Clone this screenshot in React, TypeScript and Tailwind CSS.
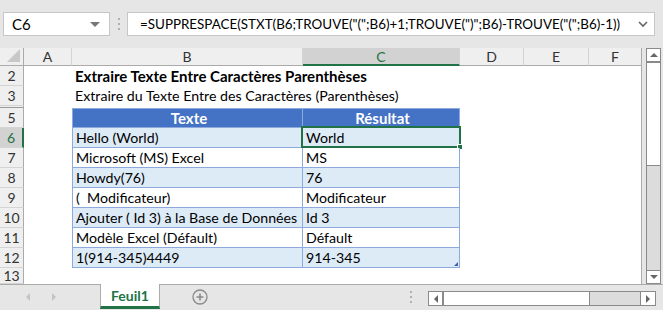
import React from "react";

const font = "font-['Lato','Open_Sans',sans-serif]";

type Row = {
  n: number;
  h: number;
  b?: string;
  c?: string;
  kind?: "title" | "sub" | "head" | "data";
  band?: boolean;
};

const rows: Row[] = [
  { n: 2, h: 20, b: "Extraire Texte Entre Caractères Parenthèses", kind: "title" },
  { n: 3, h: 20, b: "Extraire du Texte Entre des Caractères (Parenthèses)", kind: "sub" },
  { n: 5, h: 20, b: "Texte", c: "Résultat", kind: "head" },
  { n: 6, h: 20, b: "Hello (World)", c: "World", kind: "data", band: true },
  { n: 7, h: 20, b: "Microsoft (MS) Excel", c: "MS", kind: "data" },
  { n: 8, h: 20, b: "Howdy(76)", c: "76", kind: "data", band: true },
  { n: 9, h: 20, b: "(  Modificateur)", c: "Modificateur", kind: "data" },
  { n: 10, h: 20, b: "Ajouter ( Id 3) à la Base de Données", c: "Id 3", kind: "data", band: true },
  { n: 11, h: 20, b: "Modèle Excel (Défault)", c: "Défault", kind: "data" },
  { n: 12, h: 20, b: "1(914-345)4449", c: "914-345", kind: "data", band: true },
  { n: 13, h: 16 },
];

const RowHeader = ({ n, h, active }: { n: number; h: number; active?: boolean }) => (
  <div
    className={`w-[24px] shrink-0 flex items-center justify-center text-[14px] border-b border-[#d4d4d4] ${
      active
        ? "bg-[#d2d2d2] text-[#217346] border-r-2 border-r-[#217346]"
        : "bg-[#efefef] text-[#333] border-r border-r-[#ababab]"
    }`}
    style={{ height: h }}
  >
    {n}
  </div>
);

const SheetRow = ({ r }: { r: Row }) => {
  const isTable = r.kind === "head" || r.kind === "data";
  const bg = r.kind === "head" ? "bg-[#4472c4]" : r.band ? "bg-[#ddebf7]" : "bg-white";
  const txt =
    r.kind === "head"
      ? "text-white font-bold justify-center text-[15px]"
      : "text-black text-[14.2px]";
  return (
    <div className="flex">
      <RowHeader n={r.n} h={r.h} active={r.n === 6} />
      <div className="w-[48px] shrink-0 bg-white" />
      {isTable ? (
        <>
          <div
            className={`w-[231px] shrink-0 flex items-center pl-[3px] border-l border-b border-r border-[#8ea9db] ${bg} ${txt} ${
              r.kind === "head" ? "border-t" : ""
            }`}
            style={{ height: r.h }}
          >
            <span className="whitespace-pre">{r.b}</span>
          </div>
          <div
            className={`relative w-[157px] shrink-0 flex items-center pl-[3px] border-b border-r border-[#8ea9db] ${bg} ${txt} ${
              r.kind === "head" ? "border-t" : ""
            }`}
            style={{ height: r.h }}
          >
            <span>{r.c}</span>
            {r.n === 6 && (
              <>
                <div className="absolute -left-[2px] -top-[2px] -right-[2px] -bottom-[1px] border-2 border-[#217346]" />
                <div className="absolute -right-[4px] -bottom-[3px] w-[6px] h-[6px] bg-[#217346] border border-white" />
              </>
            )}
            {r.n === 12 && (
              <div className="absolute right-[1px] bottom-[1px] w-0 h-0 border-l-[4px] border-l-transparent border-b-[4px] border-b-[#3f5fa8]" />
            )}
          </div>
          <div className="flex-1 bg-white" />
        </>
      ) : (
        <div
          className={`flex-1 bg-white flex items-center pl-[3px] text-black ${
            r.kind === "title" ? "font-bold text-[15px]" : "text-[14.2px]"
          }`}
          style={{ height: r.h }}
        >
          <span className="whitespace-nowrap">{r.b}</span>
        </div>
      )}
    </div>
  );
};

const ColHeader = ({ label, w, active }: { label: string; w: number; active?: boolean }) => (
  <div
    className={`shrink-0 h-[18px] flex items-center justify-center text-[14px] border-r border-[#d4d4d4] ${
      active ? "bg-[#d2d2d2] text-[#217346] border-b-2 border-b-[#217346]" : "bg-[#efefef] text-[#333] border-b border-b-[#ababab]"
    }`}
    style={{ width: w }}
  >
    {label}
  </div>
);

export default function App() {
  return (
    <div className={`w-[663px] h-[310px] bg-[#e6e6e6] overflow-hidden ${font}`}>
      {/* formula bar */}
      <div className="h-[48px] flex items-start pt-[12px]">
        <div className="ml-[3px] w-[107px] h-[24px] bg-white border border-[#c6c6c6] flex items-center pl-[8px] pr-[9px] text-[15px] text-black">
          <span className="flex-1">C6</span>
          <div className="w-0 h-0 border-l-[5px] border-r-[5px] border-t-[5px] border-l-transparent border-r-transparent border-t-[#777]" />
        </div>
        <div className="w-[17px] h-[24px] flex flex-col items-center justify-center gap-[3px]">
          <div className="w-[2px] h-[2px] bg-[#b0b0b0]" />
          <div className="w-[2px] h-[2px] bg-[#b0b0b0]" />
          <div className="w-[2px] h-[2px] bg-[#b0b0b0]" />
        </div>
        <div className="w-[528px] h-[24px] bg-white border border-[#c6c6c6] flex items-center pl-[12px] pr-[6px] text-[13.4px] text-black">
          <span className="flex-1 whitespace-nowrap">
            =SUPPRESPACE(STXT(B6;TROUVE("(";B6)+1;TROUVE(")";B6)-TROUVE("(";B6)-1))
          </span>
          <svg width="10" height="8" viewBox="0 0 10 8">
            <path d="M1 2 L5 6 L9 2" stroke="#666" strokeWidth="1.6" fill="none" />
          </svg>
        </div>
      </div>

      {/* sheet */}
      <div className="flex h-[236px]">
        <div className="w-[642px] flex flex-col bg-white border-r border-[#ababab]">
          <div className="flex">
            <div className="w-[24px] h-[18px] shrink-0 bg-[#efefef] border-r border-b border-[#ababab] relative">
              <div className="absolute right-[3px] bottom-[3px] w-0 h-0 border-l-[13px] border-l-transparent border-b-[13px] border-b-[#c8c8c8]" />
            </div>
            <ColHeader label="A" w={48} />
            <ColHeader label="B" w={231} />
            <ColHeader label="C" w={157} active />
            <ColHeader label="D" w={64} />
            <ColHeader label="E" w={65} />
            <div className="flex-1 h-[18px] flex items-center justify-center text-[14px] text-[#333] bg-[#efefef] border-b border-[#ababab]">
              F
            </div>
          </div>
          {rows.slice(0, 2).map((r) => (
            <SheetRow key={r.n} r={r} />
          ))}
          <div className="flex h-[2px]">
            <div className="w-[24px] bg-[#efefef] border-r border-[#ababab] border-b border-b-[#9a9a9a]" />
            <div className="flex-1 bg-white" />
          </div>
          {rows.slice(2).map((r) => (
            <SheetRow key={r.n} r={r} />
          ))}
        </div>
        {/* vertical scrollbar */}
        <div className="flex-1 flex justify-center">
          <div className="w-[15px] h-[236px] flex flex-col border border-[#8a8a8a] bg-[#dcdcdc] ml-[2px]">
            <div className="h-[14px] bg-white flex items-center justify-center border-b-2 border-[#8a8a8a]">
              <div className="w-0 h-0 border-l-[4px] border-r-[4px] border-b-[4px] border-l-transparent border-r-transparent border-b-[#666]" />
            </div>
            <div className="h-[103px] bg-white border-b border-[#8a8a8a]" />
            <div className="flex-1" />
            <div className="h-[13px] bg-white flex items-center justify-center border-t border-[#8a8a8a]">
              <div className="w-0 h-0 border-l-[4px] border-r-[4px] border-t-[4px] border-l-transparent border-r-transparent border-t-[#666]" />
            </div>
          </div>
        </div>
      </div>

      {/* tabs */}
      <div className="h-[26px] flex items-start border-t border-[#ababab]">
        <div className="w-[100px] h-[24px] flex items-center pl-[26px] gap-[22px]">
          <div className="w-0 h-0 border-t-[4px] border-b-[4px] border-r-[4px] border-t-transparent border-b-transparent border-r-[#c4c4c4]" />
          <div className="w-0 h-0 border-t-[4px] border-b-[4px] border-l-[4px] border-t-transparent border-b-transparent border-l-[#c4c4c4]" />
        </div>
        <div className="-mt-px w-[60px] h-[25px] bg-white border-x border-[#ababab] border-b-[3px] border-b-[#217346] flex items-center justify-center text-[14px] font-bold text-[#217346]">
          Feuil1
        </div>
        <div className="w-[80px] h-[24px] flex items-center justify-center">
          <svg width="16" height="16" viewBox="0 0 16 16">
            <circle cx="8" cy="8" r="7" stroke="#8a8a8a" strokeWidth="1.3" fill="none" />
            <path d="M8 4.5v7M4.5 8h7" stroke="#8a8a8a" strokeWidth="1.6" />
          </svg>
        </div>
        <div className="w-[174px] h-[24px] flex flex-col items-end justify-center gap-[3px] pr-[2px]">
          <div className="w-[2px] h-[2px] bg-[#b0b0b0]" />
          <div className="w-[2px] h-[2px] bg-[#b0b0b0]" />
          <div className="w-[2px] h-[2px] bg-[#b0b0b0]" />
        </div>
        <div className="ml-[14px] mt-[6px] w-[228px] h-[15px] flex border border-[#8a8a8a] bg-[#dcdcdc]">
          <div className="w-[15px] bg-white flex items-center justify-center border-r-2 border-[#8a8a8a]">
            <div className="w-0 h-0 border-t-[4px] border-b-[4px] border-r-[4px] border-t-transparent border-b-transparent border-r-[#666]" />
          </div>
          <div className="w-[146px] bg-white border-r border-[#8a8a8a]" />
          <div className="flex-1" />
          <div className="w-[15px] bg-white flex items-center justify-center border-l border-[#8a8a8a]">
            <div className="w-0 h-0 border-t-[4px] border-b-[4px] border-l-[4px] border-t-transparent border-b-transparent border-l-[#666]" />
          </div>
        </div>
      </div>
    </div>
  );
}
